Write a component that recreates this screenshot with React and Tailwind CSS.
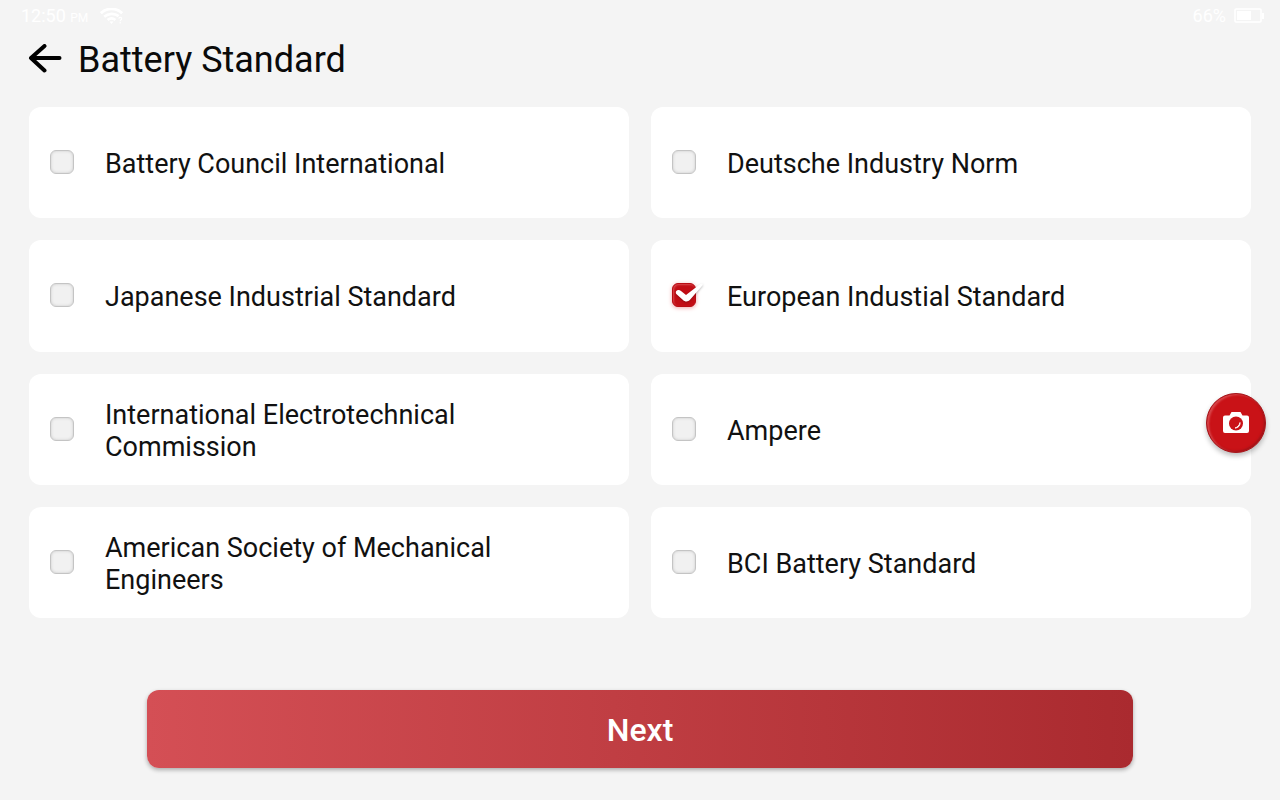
import { useState } from 'react';

const STANDARDS = [
  { id: 'bci', label: 'Battery Council International' },
  { id: 'din', label: 'Deutsche Industry Norm' },
  { id: 'jis', label: 'Japanese Industrial Standard' },
  { id: 'en', label: 'European Industial Standard' },
  { id: 'iec', label: 'International Electrotechnical Commission' },
  { id: 'ampere', label: 'Ampere' },
  { id: 'asme', label: 'American Society of Mechanical Engineers' },
  { id: 'bci-battery', label: 'BCI Battery Standard' }
];

function WifiIcon() {
  return (
    <svg className="ml-3 h-4 w-6" viewBox="0 0 24 16" fill="none" stroke="currentColor" strokeWidth="2.8" aria-hidden="true">
      <path d="M.8 5.200C7-.6 16-.6 22.200 5.200" />
      <path d="M4.200 8.800c4.200-3.800 10.400-3.800 14.400-.6" />
      <path d="M7.600 12c2.400-2 5.400-2 7.800 0" />
      <path d="M9.500 13.600h4L11.500 16z" fill="currentColor" stroke="none" />
      <path d="M18.800 10.600c.2-1.800 3.100-1.600 2.800.2-.2 1.100-1.400 1.200-1.400 2.400M20.200 14v1.400" strokeWidth="1.200" />
    </svg>
  );
}

function BatteryIcon() {
  return (
    <svg className="h-4 w-[30px]" viewBox="0 0 30 16" fill="none" aria-hidden="true">
      <rect x="1" y="1" width="26" height="13" rx="1" stroke="currentColor" strokeWidth="1.600" />
      <path d="M3 3h14v9H3zM28 5h2v6h-2z" fill="currentColor" />
    </svg>
  );
}

function StatusBar() {
  return (
    <div className="flex h-8 items-center justify-between pl-[21px] pr-4 text-lg text-white">
      <div className="flex items-center">
        <span>12:50 <span className="text-xs">PM</span></span>
        <WifiIcon />
      </div>
      <div className="flex items-center gap-2">
        <span>66%</span>
        <BatteryIcon />
      </div>
    </div>
  );
}

function StandardCard({ id, label, checked, onChange }) {
  return (
    <label htmlFor={id} className="flex cursor-pointer items-center rounded-xl bg-white px-[21px] pb-px">
      <span className="relative mr-[31px] flex shrink-0">
        <input
          id={id}
          type="checkbox"
          checked={checked}
          onChange={onChange}
          className="size-6 appearance-none rounded-md border border-[#c4c4c4] bg-[#f1f1f1] shadow-[inset_0_0_3px_#c8c8c8] checked:border-[#b90d14] checked:bg-[#c20d15] checked:shadow-[inset_1px_1px_2px_#d9484d,0_1px_4px_#f0a5a8]"
        />
        {checked && (
          <svg className="pointer-events-none absolute left-0 top-0 h-6 w-8 drop-shadow-[0_1px_1px_rgba(0,0,0,0.25)]" viewBox="0 0 32 24" aria-hidden="true">
            <path d="M4 8.500C5 6.500 7.500 6.500 9 8l5 4L28 1.200c1.800-1.200 3.600-.6 2.400 1.200L18 16.800c-1.900 2.200-5 2.200-7 .2L4.600 11.200C3.800 10.400 3.600 9.400 4 8.500z" fill="#fff" />
          </svg>
        )}
      </span>
      <span className="pt-1 text-[27px] leading-8 text-[#111]">{label}</span>
    </label>
  );
}

function CameraButton() {
  return (
    <button
      type="button"
      aria-label="Take screenshot"
      className="fixed right-3.5 top-[393px] flex size-15 items-center justify-center rounded-full border border-[#a5161b] bg-[#c91217] pb-px shadow-[0_3px_5px_rgba(0,0,0,0.25),inset_2px_1px_2px_#d8474b,inset_-1px_-1px_2px_#9c1519]"
    >
      <svg className="h-6 w-7" viewBox="0 0 28 24" aria-hidden="true">
        <path d="M3 4.500h4.500L9.500 1h9l2 3.500H25a2 2 0 0 1 2 2V20a2 2 0 0 1-2 2H3a2 2 0 0 1-2-2V6.500a2 2 0 0 1 2-2z" fill="#fff" />
        <circle cx="14" cy="12.500" r="7" fill="#c91217" />
        <path d="M18 11.500c.4 3-1.800 5.600-5 5.500 2.600-.8 4.300-2.600 5-5.500z" fill="#fff" stroke="#fff" strokeWidth=".8" />
      </svg>
    </button>
  );
}

export default function App() {
  const [selected, setSelected] = useState('en');

  return (
    <div className="min-h-screen bg-[#f4f4f4] font-[Roboto,sans-serif]">
      <StatusBar />

      <header className="flex h-[75px] items-start gap-4 px-7 pt-1">
        <button type="button" aria-label="Back" className="mt-2">
          <svg className="h-8 w-[34px]" viewBox="0 0 34 32" fill="none" stroke="#000" strokeWidth="4" strokeLinecap="round" strokeLinejoin="round" aria-hidden="true">
            <path d="M31.500 14H3M16.500 2L3 14l13.500 12.500" />
          </svg>
        </button>
        <h1 className="text-4xl leading-12 text-[#0a0a0a]">Battery Standard</h1>
      </header>

      <main className="px-[29px]">
        <div className="grid min-h-[511px] auto-rows-fr grid-cols-2 gap-[22px]">
          {STANDARDS.map((item) => (
            <StandardCard
              key={item.id}
              id={item.id}
              label={item.label}
              checked={selected === item.id}
              onChange={() => setSelected(item.id)}
            />
          ))}
        </div>

        <div className="mt-18 flex justify-center px-[118px] pb-8">
          <button
            type="button"
            className="h-[78px] w-full rounded-xl bg-linear-to-r from-[#d44f55] to-[#aa2a2f] pt-0.5 text-[32px] font-medium text-white shadow-[0_2px_4px_rgba(0,0,0,0.3)]"
          >
            Next
          </button>
        </div>
      </main>

      <CameraButton />
    </div>
  );
}
